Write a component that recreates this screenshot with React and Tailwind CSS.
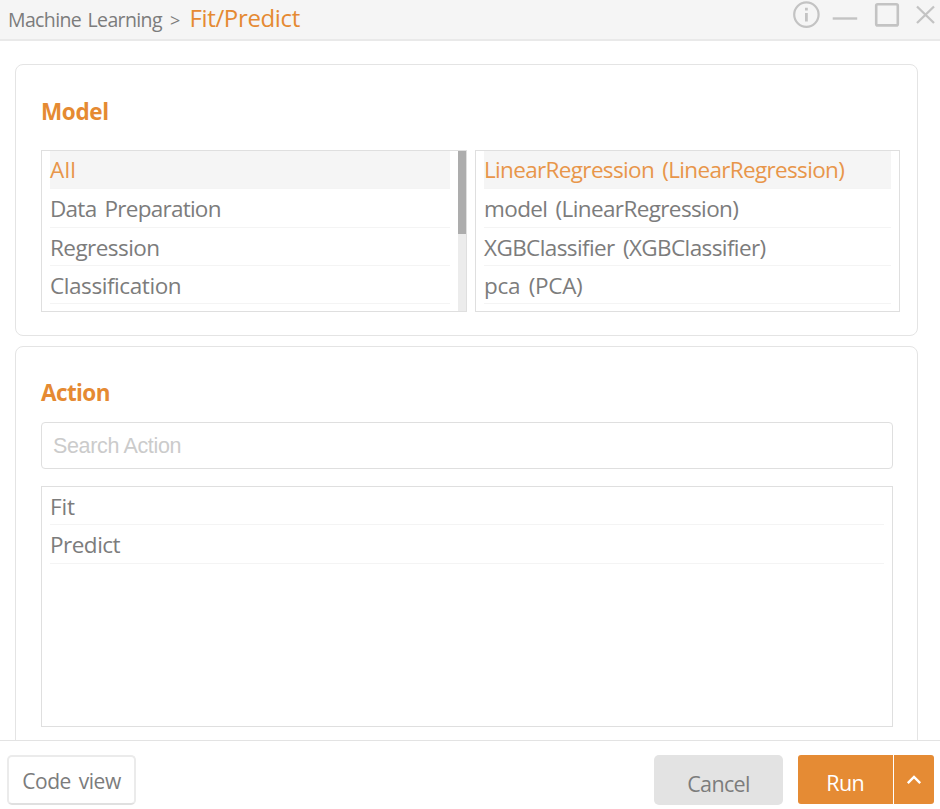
const MODEL_TYPES = [
  { label: 'All', cls: 'tracking-[0.15px]' },
  { label: 'Data Preparation', cls: 'tracking-[-0.74px]' },
  { label: 'Regression', cls: 'tracking-[-0.55px]' },
  { label: 'Classification', cls: 'tracking-[-0.42px]' },
];
const MODELS = [
  { label: 'LinearRegression (LinearRegression)', cls: 'tracking-[-0.66px]' },
  { label: 'model (LinearRegression)', cls: 'tracking-[-0.62px]' },
  { label: 'XGBClassifier (XGBClassifier)', cls: 'tracking-[-0.6px]' },
  { label: 'pca (PCA)', cls: 'tracking-[-0.3px]' },
];
const ACTIONS = [
  { label: 'Fit', cls: 'tracking-[-0.2px]' },
  { label: 'Predict', cls: 'tracking-[-0.5px]' },
];

function List({ items, selected }) {
  return (
    <ul className="min-w-0 flex-1 px-2">
      {items.map((item, i) => (
        <li
          key={item.label}
          className={
            'flex h-[38.3px] items-center whitespace-nowrap border-b border-[#f4f4f4] text-[22.5px] leading-[36px] [word-spacing:3px] ' +
            (i === selected ? 'bg-[#f5f5f5] text-[#e8964a]' : 'pt-[2.5px] text-[#7c7c7c]')
          }
        >
          <span className={item.cls}>{item.label}</span>
        </li>
      ))}
    </ul>
  );
}

export default function App() {
  return (
    <div className="flex h-[809px] w-[940px] flex-col overflow-hidden bg-white font-['Open_Sans','Noto_Sans',sans-serif] text-[#7c7c7c]">
      <header className="flex h-[41px] shrink-0 items-start justify-between border-b-2 border-[#e9e9e9] bg-[#f5f5f5]">
        <div className="flex whitespace-nowrap pl-2">
          <span className="w-[162px] pt-px text-[19.5px] leading-[38px] tracking-[-0.63px] [word-spacing:2px]">Machine Learning</span>
          <span className="w-[19.5px] pt-px text-[18px] leading-[38px]">&gt;</span>
          <span className="text-[24px] leading-[36px] tracking-[-0.36px] text-[#e58a32]">Fit/Predict</span>
        </div>
        <svg width="150" height="32" viewBox="790 0 150 32" fill="none" stroke="#c3c3c3" strokeWidth="2.2">
          <circle cx="806.4" cy="14.6" r="12.2" />
          <path d="M806.4 13v8.5M806.4 7.8v2.8" strokeWidth="2.8" />
          <path d="M832.7 18.5h24.5" strokeWidth="2.4" />
          <rect x="876.2" y="4.2" width="21.6" height="21.2" rx="1.5" strokeWidth="2.6" />
          <path d="M917 6.5l17 16.5M934 6.5L917 23" strokeWidth="2.3" />
        </svg>
      </header>

      <main className="flex min-h-0 flex-1 flex-col gap-[10px] overflow-hidden pl-[15px] pr-[22px] pt-[23px]">
        <section className="h-[272px] shrink-0 rounded-[8px] border border-[#e4e4e4] pl-[25px] pr-[16px] pt-[27px]">
          <h2 className="h-[58px] text-[22.5px] font-bold leading-[40px] tracking-[-0.35px] text-[#e58a32]">Model</h2>
          <div className="flex gap-2">
            <div className="flex h-[162px] w-[426px] overflow-hidden border border-[#dfdfdf]">
              <List items={MODEL_TYPES} selected={0} />
              <div className="w-[8px] bg-[#ececec]">
                <div className="h-[83px] bg-[#adadad]" />
              </div>
            </div>
            <div className="flex h-[162px] w-[425px] overflow-hidden border border-[#dfdfdf]">
              <List items={MODELS} selected={0} />
            </div>
          </div>
        </section>

        <section className="h-[420px] shrink-0 rounded-[8px] border border-[#e4e4e4] pl-[25px] pr-[24px] pt-[26px]">
          <h2 className="h-[49px] text-[22.5px] font-bold leading-[40px] tracking-[-0.6px] text-[#e58a32]">Action</h2>
          <input
            className="block h-[47px] w-[852px] rounded-[4px] border border-[#dfdfdf] bg-white px-[11px] pt-[2px] font-['Liberation_Sans',sans-serif] text-[21.5px] tracking-[-0.35px] placeholder:text-[#cbcbcb]"
            placeholder="Search Action"
          />
          <div className="mt-[17px] flex h-[241px] w-[852px] border border-[#dfdfdf]">
            <List items={ACTIONS} selected={-1} />
          </div>
        </section>
      </main>

      <footer className="flex h-[69px] shrink-0 items-start border-t border-[#e3e3e3] bg-white pl-[7px] pt-[14px]">
        <button className="h-[50px] w-[129px] whitespace-nowrap rounded-[5px] border-2 border-[#ebebeb] border-b-[#e0e0e0] bg-white pt-[2px] text-[21px] leading-[45px] tracking-[-0.5px] [word-spacing:3px]">
          <span>Code view</span>
        </button>
        <button className="ml-[518px] h-[50px] w-[129px] rounded-[5px] bg-[#e3e3e3] pt-[6px] text-[21.5px] leading-[43px] tracking-[-0.65px]">
          <span>Cancel</span>
        </button>
        <button className="ml-[15px] h-[49px] w-[94.5px] rounded-l-[3px] bg-[#e58b34] pt-[5px] text-[21.5px] leading-[43px] tracking-[-0.6px] text-white">
          <span>Run</span>
        </button>
        <button className="ml-[1.5px] flex h-[49px] w-[40px] items-center justify-center rounded-r-[3px] bg-[#e58b34]">
          <svg width="16" height="10" viewBox="0 0 16 10" fill="none" stroke="#fff" strokeWidth="2.4">
            <path d="M1.8 8.2L8 2l6.2 6.2" />
          </svg>
        </button>
      </footer>
    </div>
  );
}
